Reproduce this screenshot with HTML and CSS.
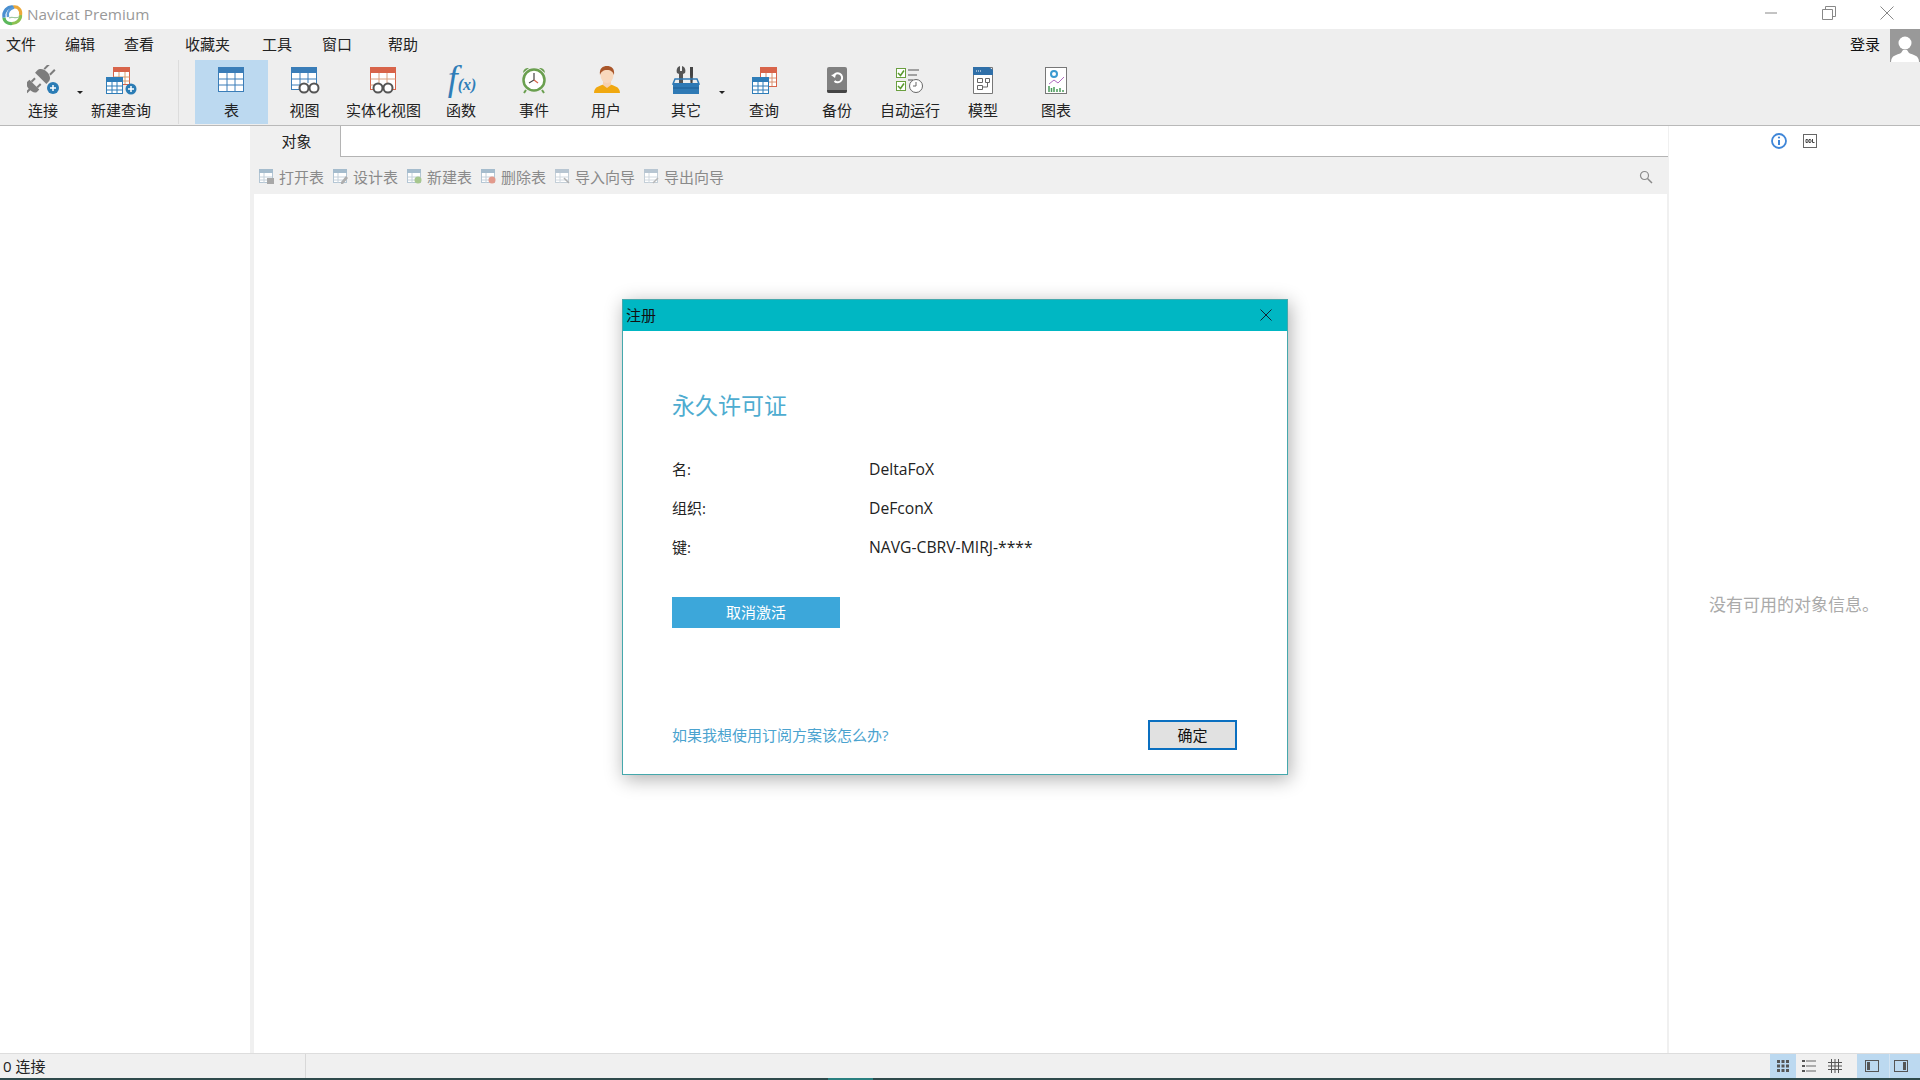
FILE: index.html
```html
<!DOCTYPE html>
<html lang="zh-CN">
<head>
<meta charset="utf-8">
<title>Navicat Premium</title>
<link rel="stylesheet" href="styles.css">
</head>
<body>
<div class="app">
  <header class="titlebar">
    <svg class="logo" width="22" height="22" viewBox="0 0 22 22"><path d="M11 19.500c-4 .5-8-2-8-6" fill="none" stroke="#5cb85c" stroke-width="3.200"/><path d="M19.500 11c.5 5-4 8.500-8.500 8.500" fill="none" stroke="#8cc152" stroke-width="3.200"/><path d="M12 3c5-1 8.500 3 7.500 8" fill="none" stroke="#eba83a" stroke-width="3.200"/><path d="M3 13.500C2 7 7 2 12 3" fill="none" stroke="#4a8fd0" stroke-width="3.200"/><path d="M13 3.500C8 5 6 9 7 13" fill="none" stroke="#5a9ad8" stroke-width="2.500"/><path d="M8 14c3-2 6 1 10-1" fill="none" stroke="#9fc8a0" stroke-width="1.200"/></svg>
    <span class="app-name">Navicat Premium</span>
    <div class="winctl">
      <svg width="14" height="14" viewBox="0 0 14 14"><path d="M1 7h12" stroke="#888" fill="none"/></svg>
      <svg width="14" height="14" viewBox="0 0 14 14"><path d="M.5 3.500h10v10H.5zM3.500 3.500v-3h10v10h-3" stroke="#888" fill="none"/></svg>
      <svg width="14" height="14" viewBox="0 0 14 14"><path d="M.5.500l13 13M13.500.500l-13 13" stroke="#888" fill="none"/></svg>
    </div>
  </header>

  <div class="chrome">
    <nav class="menubar">
      <span class="menu">文件</span>
      <span class="menu">编辑</span>
      <span class="menu">查看</span>
      <span class="menu m-fav">收藏夹</span>
      <span class="menu m-tool">工具</span>
      <span class="menu m-win">窗口</span>
      <span class="menu m-help">帮助</span>
      <span class="login">登录</span>
      <span class="avatar"><svg width="30" height="33" viewBox="0 0 30 33"><circle cx="15" cy="14" r="6.500" fill="#fff"/><path d="M1 33c0-7 6-7 10-9l2-3h4l2 3c4 2 10 2 10 9z" fill="#fff"/></svg></span>
    </nav>

    <div class="toolbar">
      <div class="tool w74">
        <svg width="32" height="30" viewBox="0 0 32 30"><g fill="#7d7d7d" transform="rotate(-45 13 14)"><path d="M-6 13h8v2h-8z"/><path d="M2 7h3v14H2c-3 0-4-4-4-7s1-7 4-7z"/><path d="M5 9h5v2H5zM5 17h5v2H5z"/><path d="M14 6h3c4 0 6 4 6 8s-2 8-6 8h-3z"/><path d="M23 9h7v2h-7zM23 17h7v2h-7z"/></g><circle cx="26" cy="23" r="6" fill="#2b7cb5"/><path d="M26 20v6M23 23h6" stroke="#fff" stroke-width="1.500"/></svg>
        <span class="tool-label">连接</span><span class="caret"></span>
      </div>
      <div class="tool w82">
        <svg width="32" height="30" viewBox="0 0 32 30"><rect x="8.500" y="2.500" width="16" height="17" fill="#fff" stroke="#d8644a"/><rect x="8" y="2" width="17" height="5" fill="#d8644a"/><path d="M8.500 12h16M8.500 16h16M14 7v12M20 7v12" stroke="#d8a070" fill="none"/><rect x="1.500" y="12.500" width="16" height="16" fill="#fff" stroke="#2f7db8"/><rect x="1" y="12" width="17" height="5" fill="#2f7db8"/><path d="M1.500 21h16M1.500 25h16M7 17v11M12 17v11" stroke="#2f7db8" fill="none"/><circle cx="26" cy="24" r="5.500" fill="#2b7cb5"/><path d="M26 21v6M23 24h6" stroke="#fff" stroke-width="1.500"/></svg>
        <span class="tool-label">新建查询</span>
      </div>
      <div class="tb-sep"></div>
      <div class="tool w73 active">
        <svg width="32" height="30" viewBox="0 0 32 30"><rect x="3.500" y="2.500" width="25" height="24" fill="#fff" stroke="#3a7db8"/><rect x="3" y="2" width="26" height="6" fill="#3a7db8"/><path d="M3.500 14h25M3.500 20h25M12 8v18M20 8v18" stroke="#3a7db8" fill="none"/></svg>
        <span class="tool-label">表</span>
      </div>
      <div class="tool w73">
        <svg width="32" height="30" viewBox="0 0 32 30"><rect x="3.500" y="2.500" width="25" height="22" fill="#fff" stroke="#3a7db8"/><rect x="3" y="2" width="26" height="6" fill="#3a7db8"/><path d="M3.500 14h25M3.500 20h12M12 8v14M20 8v10" stroke="#3a7db8" fill="none"/><circle cx="16" cy="23" r="4.500" fill="#fff" stroke="#555" stroke-width="2"/><circle cx="26" cy="23" r="4.500" fill="#fff" stroke="#555" stroke-width="2"/></svg>
        <span class="tool-label">视图</span>
      </div>
      <div class="tool w85">
        <svg width="32" height="30" viewBox="0 0 32 30"><rect x="3.500" y="2.500" width="25" height="22" fill="#fff" stroke="#d8644a"/><rect x="3" y="2" width="26" height="6" fill="#d8644a"/><path d="M3.500 14h25M3.500 20h10M12 8v14M20 8v10" stroke="#d8a080" fill="none"/><circle cx="11" cy="23" r="4.500" fill="#fff" stroke="#555" stroke-width="2"/><circle cx="21" cy="23" r="4.500" fill="#fff" stroke="#555" stroke-width="2"/></svg>
        <span class="tool-label">实体化视图</span>
      </div>
      <div class="tool w70">
        <span class="fx"><i class="fx-f">f</i><i class="fx-x">(x)</i></span>
        <span class="tool-label">函数</span>
      </div>
      <div class="tool w76">
        <svg width="32" height="30" viewBox="0 0 32 30"><path d="M5 8a5 5 0 0 1 6-5zM27 8a5 5 0 0 0-6-5z" fill="#6a9f4f"/><path d="M8 25l-2 3M24 25l2 3" stroke="#6a9f4f" stroke-width="2"/><circle cx="16" cy="15" r="10.500" fill="#fff" stroke="#6a9f4f" stroke-width="2.500"/><path d="M16 8v7l-5 3" stroke="#444" stroke-width="1.200" fill="none"/><path d="M16 15l4 3" stroke="#d8644a" stroke-width="1.200"/></svg>
        <span class="tool-label">事件</span>
      </div>
      <div class="tool w68">
        <svg width="32" height="30" viewBox="0 0 32 30"><path d="M4 28c0-7 7-7 10-9h6c3 2 10 2 10 9z" fill="#f0a810"/><path d="M13 16h8v4l-4 3-4-3z" fill="#f6d0b0"/><ellipse cx="17" cy="10" rx="6.500" ry="8" fill="#f8d8bc"/><path d="M10 10C9 3 13 1 17 1s8 2 7 9c-1-3-3-5-7-5s-6 2-7 5z" fill="#a9562a"/></svg>
        <span class="tool-label">用户</span>
      </div>
      <div class="tool w92">
        <svg width="32" height="30" viewBox="0 0 32 30"><path d="M10 1v5h2V1c3 1 4 4 3 7l-2 1v9H9V9L7 8C6 5 7 2 10 1z" fill="#555"/><path d="M20 2h3v8l-.5 8h-2L20 10z" fill="#444"/><path d="M3 18h26v11H3z" fill="#2f7ab5"/><path d="M5 14h22l2 5H3z" fill="none" stroke="#2f7ab5" stroke-width="1.500"/><path d="M3 23h26" stroke="#1f5f95"/></svg>
        <span class="tool-label">其它</span><span class="caret caret-other"></span>
      </div>
      <div class="tool w64">
        <svg width="32" height="30" viewBox="0 0 32 30"><rect x="12.500" y="2.500" width="16" height="19" fill="#fff" stroke="#d8644a"/><rect x="12" y="2" width="17" height="6" fill="#d8644a"/><path d="M18 8v13M24 8v13M18 13h10M18 17h10" stroke="#d89070" fill="none"/><rect x="4.500" y="12.500" width="16" height="16" fill="#fff" stroke="#2f7db8"/><rect x="4" y="12" width="17" height="5" fill="#2f7db8"/><path d="M4.500 21h16M4.500 25h16M10 17v11M15 17v11" stroke="#2f7db8" fill="none"/></svg>
        <span class="tool-label">查询</span>
      </div>
      <div class="tool w82">
        <svg width="32" height="30" viewBox="0 0 32 30"><rect x="6" y="2" width="20" height="26" rx="2" fill="#808080"/><path d="M6 25h20v1a2 2 0 0 1-2 2H8a2 2 0 0 1-2-2z" fill="#444"/><path d="M12.500 11a4.500 4.500 0 1 1 1 5" fill="none" stroke="#fff" stroke-width="2"/><path d="M10 10l5-1-1 4z" fill="#fff"/></svg>
        <span class="tool-label">备份</span>
      </div>
      <div class="tool w64">
        <svg width="32" height="30" viewBox="0 0 32 30"><rect x="2.500" y="3.500" width="9" height="9" fill="#fff" stroke="#6a9f3f"/><rect x="2.500" y="16.500" width="9" height="9" fill="#fff" stroke="#6a9f3f"/><path d="M4 8l2.500 2.500L10 5.500M4 21l2.500 2.500L10 18.500" stroke="#5a9a2f" stroke-width="1.500" fill="none"/><path d="M14 5h11M14 10h9M14 15h5" stroke="#888" stroke-width="1.500"/><circle cx="22" cy="21" r="6.500" fill="#fff" stroke="#666"/><path d="M22 17v4h-3" stroke="#666" fill="none"/></svg>
        <span class="tool-label">自动运行</span>
      </div>
      <div class="tool w82">
        <svg width="32" height="30" viewBox="0 0 32 30"><path d="M6.500 2.500h19v26h-19z" fill="#fff" stroke="#777"/><path d="M6 2h16l4 3v5H6z" fill="#2f6fa8"/><path d="M9 6h1M11 6h1M13 6h1" stroke="#fff"/><path d="M10.500 13.500h5v4h-5zM18.500 13.500h4v4h-4zM10.500 20.500h5v4h-5zM15.500 22h5v-4.500" stroke="#666" fill="none"/></svg>
        <span class="tool-label">模型</span>
      </div>
      <div class="tool w64">
        <svg width="32" height="30" viewBox="0 0 32 30"><rect x="5.500" y="2.500" width="21" height="26" fill="#fff" stroke="#777"/><circle cx="14" cy="9" r="3" fill="none" stroke="#3a9ad0" stroke-width="2"/><path d="M9 19l5-4 4 3 6-6" stroke="#b06ac0" fill="none"/><path d="M9 27v-6M11.500 27v-4M14 27v-5M17 27v-3M20 27v-4M23 27v-2" stroke="#4a9a5a" stroke-width="1.500"/></svg>
        <span class="tool-label">图表</span>
      </div>
    </div>
  </div>

  <main class="workspace">
    <aside class="nav-pane"></aside>
    <section class="center-pane">
      <div class="tabrow">
        <span class="tab">对象</span>
        <span class="tab-fill"></span>
      </div>
      <div class="actions">
        <span class="action"><svg class="act-ico" width="15" height="15" viewBox="0 0 15 15"><rect x=".5" y=".5" width="13" height="13" fill="#fff" stroke="#b4c6d4"/><rect y="0" width="14" height="4" fill="#a5bccd"/><path d="M5 4v10M1 8h12M1 11h12" stroke="#c4d0da"/><rect x="8" y="9" width="7" height="6" fill="#a8a8a8"/></svg>打开表</span>
        <span class="action"><svg class="act-ico" width="15" height="15" viewBox="0 0 15 15"><rect x=".5" y=".5" width="13" height="13" fill="#fff" stroke="#b4c6d4"/><rect y="0" width="14" height="4" fill="#a5bccd"/><path d="M5 4v10M1 8h12M1 11h12" stroke="#c4d0da"/><path d="M8 13l5-6 2 2-5 6H8z" fill="#aeaeae"/></svg>设计表</span>
        <span class="action"><svg class="act-ico" width="15" height="15" viewBox="0 0 15 15"><rect x=".5" y=".5" width="13" height="13" fill="#fff" stroke="#b4c6d4"/><rect y="0" width="14" height="4" fill="#a5bccd"/><path d="M5 4v10M1 8h12M1 11h12" stroke="#c4d0da"/><circle cx="11" cy="11" r="3.500" fill="#a7c78f"/></svg>新建表</span>
        <span class="action"><svg class="act-ico" width="15" height="15" viewBox="0 0 15 15"><rect x=".5" y=".5" width="13" height="13" fill="#fff" stroke="#b4c6d4"/><rect y="0" width="14" height="4" fill="#a5bccd"/><path d="M5 4v10M1 8h12M1 11h12" stroke="#c4d0da"/><circle cx="11" cy="11" r="3.500" fill="#e29a8c"/></svg>删除表</span>
        <span class="action"><svg class="act-ico" width="15" height="15" viewBox="0 0 15 15"><rect x=".5" y=".5" width="13" height="13" fill="#fff" stroke="#c4cfd8"/><rect y="0" width="14" height="4" fill="#b8c6d2"/><path d="M5 4v10M1 8h12M1 11h12" stroke="#d0d8df"/><path d="M9 9l5 5" stroke="#b0b0b0" stroke-width="1.500"/></svg>导入向导</span>
        <span class="action"><svg class="act-ico" width="15" height="15" viewBox="0 0 15 15"><rect x=".5" y=".5" width="13" height="13" fill="#fff" stroke="#c4cfd8"/><rect y="0" width="14" height="4" fill="#b8c6d2"/><path d="M5 4v10M1 8h12M1 11h12" stroke="#d0d8df"/><path d="M14 9l-5 5" stroke="#b8b8b8" stroke-width="1.500"/></svg>导出向导</span>
        <svg class="search" width="14" height="14" viewBox="0 0 14 14"><circle cx="5.500" cy="5.500" r="4" fill="none" stroke="#8a8a8a" stroke-width="1.200"/><path d="M8.500 8.500l4.500 4.500" stroke="#8a8a8a" stroke-width="1.500"/></svg>
      </div>
      <div class="objects"></div>
    </section>
    <aside class="info-pane">
      <div class="info-tabs">
        <svg width="18" height="18" viewBox="0 0 18 18"><circle cx="9" cy="9" r="7" fill="#fff" stroke="#3f86d8" stroke-width="1.800"/><path d="M9 8v5" stroke="#3f86d8" stroke-width="2"/><circle cx="9" cy="5.500" r="1.100" fill="#3f86d8"/></svg>
        <svg width="14" height="14" viewBox="0 0 14 14"><rect x=".5" y=".5" width="13" height="13" fill="#fff" stroke="#666"/><path d="M3 5.500h1.500l.5.500v2l-.5.500H3zM6 5.500h1.500l.5.500v2l-.5.500H6zM9.500 5v3.500H11.500" fill="none" stroke="#444"/></svg>
      </div>
      <p class="no-info">没有可用的对象信息。</p>
    </aside>
  </main>

  <footer class="statusbar">
    <span class="status-count">0 连接</span>
    <span class="status-fill"></span>
    <span class="sb-btn on"><svg width="14" height="14" viewBox="0 0 14 14"><path d="M1 1h3v3H1zM5.500 1h3v3h-3zM10 1h3v3h-3zM1 5.500h3v3H1zM5.500 5.500h3v3h-3zM10 5.500h3v3h-3zM1 10h3v3H1zM5.500 10h3v3h-3zM10 10h3v3h-3z" fill="#555"/></svg></span>
    <span class="sb-btn"><svg width="16" height="14" viewBox="0 0 16 14"><path d="M1 1h3v2H1zM1 6h3v2H1zM1 11h3v2H1z" fill="#555"/><path d="M5 2h10M5 7h10M5 12h10" stroke="#666"/></svg></span>
    <span class="sb-btn"><svg width="14" height="14" viewBox="0 0 14 14"><path d="M3.500 0v14M7 0v14M10.500 0v14M0 3.500h14M0 7h14M0 10.500h14" stroke="#555" fill="none"/></svg></span>
    <span class="sb-gap"></span>
    <span class="sb-btn wide on"><svg width="14" height="14" viewBox="0 0 14 14"><rect x=".5" y="1.500" width="13" height="11" fill="none" stroke="#555"/><rect x="2" y="3" width="3" height="8" fill="#555"/></svg></span>
    <span class="sb-btn wide on last"><svg width="14" height="14" viewBox="0 0 14 14"><rect x=".5" y="1.500" width="13" height="11" fill="none" stroke="#555"/><rect x="9" y="3" width="3" height="8" fill="#555"/></svg></span>
  </footer>
  <div class="taskstrip"><span class="taskstrip-tab"></span></div>

  <div class="dialog">
    <div class="dialog-title">
      <span>注册</span>
      <svg width="12" height="12" viewBox="0 0 12 12"><path d="M.5.500l11 11M11.500.500l-11 11" stroke="#123" fill="none"/></svg>
    </div>
    <div class="dialog-body">
      <h1 class="lic-title">永久许可证</h1>
      <dl class="lic-grid">
        <dt>名:</dt><dd>DeltaFoX</dd>
        <dt>组织:</dt><dd>DeFconX</dd>
        <dt>键:</dt><dd>NAVG-CBRV-MIRJ-****</dd>
      </dl>
      <button class="deactivate" type="button">取消激活</button>
      <div class="dialog-foot">
        <a class="sub-link">如果我想使用订阅方案该怎么办?</a>
        <button class="ok" type="button">确定</button>
      </div>
    </div>
  </div>
</div>
</body>
</html>
```
FILE: styles.css
```css
* { box-sizing: border-box; }
html, body { margin: 0; height: 100%; overflow: hidden; }
body {
  font-family: "Open Sans", "Noto Sans CJK SC", sans-serif;
  font-size: 15px;
  color: #222;
  background: #fff;
}
.app { position: relative; display: flex; flex-direction: column; height: 1080px; }

.titlebar { display: flex; align-items: center; height: 29px; padding-left: 1px; background: #fff; flex: none; }
.logo { flex: none; }
.app-name { margin-left: 4px; margin-bottom: 2px; color: #999; font-size: 15.3px; }
.winctl { margin-left: auto; display: flex; gap: 44px; padding: 0 26px 3px 0; }

.chrome { background: #eee; border-bottom: 1px solid #b9b9b9; flex: none; height: 97px; }
.menubar { display: flex; align-items: flex-start; height: 31px; padding-left: 6px; gap: 29px; }
.menu { font-size: 15px; line-height: 30px; color: #222; }
.m-fav { margin-left: 2px; }
.m-tool { margin-left: 3px; }
.m-win { margin-left: 1px; }
.m-help { margin-left: 7px; }
.login { margin-left: auto; line-height: 30px; color: #111; }
.avatar { width: 30px; height: 33px; margin-left: -19px; background: #999; overflow: hidden; }

.toolbar { display: flex; height: 65px; padding-left: 6px; }
.tool { position: relative; display: flex; flex-direction: column; align-items: center; height: 64px; padding-top: 5px; flex: none; }
.tool svg { display: block; flex: none; }
.tool-label { margin-top: 5px; font-size: 15px; line-height: 20px; color: #222; white-space: nowrap; }
.w64 { width: 64px; } .w68 { width: 68px; } .w70 { width: 70px; } .w73 { width: 73px; }
.w74 { width: 74px; } .w76 { width: 76px; } .w82 { width: 82px; }
.w85 { width: 85px; } .w92 { width: 92px; }
.w73 svg, .w85 svg { margin-right: 1px; }
.active { background: #bcd9f0; }
.tb-sep { width: 1px; height: 64px; margin: 0 16px; background: #dcdcdc; flex: none; }
.caret { position: absolute; right: -3px; top: 31px; border: 3px solid transparent; border-top: 3px solid #222; }
.caret-other { right: 7px; }
.fx { display: flex; align-items: baseline; height: 30px; margin-left: 2px; font-family: "Liberation Serif", serif; color: #2f7db8; }
.fx-f { font-size: 36px; line-height: 27px; }
.fx-x { font-size: 16px; font-weight: bold; }

.workspace { display: flex; flex: 1; min-height: 0; }
.nav-pane { width: 250px; background: #fff; flex: none; }
.center-pane { width: 1419px; flex: none; display: flex; flex-direction: column; background: #f0f0f0; padding-right: 2px; }
.tabrow { display: flex; height: 31px; flex: none; margin-right: -1px; }
.tab { width: 90px; padding-left: 3px; text-align: center; line-height: 30px; color: #222; background: #f0f0f0; }
.tab-fill { flex: 1; background: #fff; border-left: 1px solid #b4b4b4; border-bottom: 1px solid #b4b4b4; }
.actions { display: flex; align-items: center; height: 37px; padding: 1px 0 0 9px; gap: 9px; flex: none; }
.action { display: flex; align-items: center; gap: 5px; color: #8a8a8a; font-size: 15px; white-space: nowrap; }
.act-ico { flex: none; }
.search { margin-left: auto; margin-right: 14px; margin-top: 2px; }
.objects { flex: 1; margin-left: 4px; background: #fff; }
.info-pane { flex: 1; display: flex; flex-direction: column; background: #fff; }
.info-tabs { display: flex; align-items: center; gap: 15px; height: 30px; padding-left: 101px; }
.no-info { margin: 437px 0 0; text-align: center; font-size: 17px; line-height: 24px; color: #aaa; padding-right: 1px; white-space: nowrap; }

.statusbar { display: flex; align-items: stretch; height: 25px; background: #f0f0f0; border-top: 1px solid #ddd; flex: none; }
.status-count { width: 306px; padding-left: 3px; line-height: 25px; color: #222; border-right: 1px solid #d8d8d8; }
.status-fill { flex: 1; }
.sb-btn { width: 26px; display: flex; align-items: center; justify-content: center; }
.sb-btn.on { background: #bcd9f0; }
.sb-gap { width: 9px; }
.sb-btn.wide { width: 32px; padding-right: 2px; }
.sb-btn.last { width: 31px; padding-right: 8px; border-left: 1px solid #d4e4f2; }
.taskstrip { position: relative; height: 2px; background: #2f4a4c; flex: none; }
.taskstrip-tab { position: absolute; left: 828px; top: 0; width: 45px; height: 2px; background: #2a8080; }

.dialog { position: absolute; left: 622px; top: 299px; width: 666px; height: 476px; display: flex; flex-direction: column; background: #fff; border: 1px solid #45a8ac; box-shadow: 2px 4px 18px rgba(0,0,0,.32); }
.dialog-title { display: flex; align-items: center; justify-content: space-between; height: 31px; padding: 0 15px 2px 3px; background: #00b7c3; color: #111; font-size: 15px; flex: none; }
.dialog-body { flex: 1; display: flex; flex-direction: column; padding: 0 50px 24px 49px; }
.lic-title { margin: 57px 0 0; font-size: 23px; line-height: 34px; font-weight: normal; color: #4eacd0; }
.lic-grid { display: grid; grid-template-columns: 197px 1fr; grid-auto-rows: 39px; margin: 27px 0 0; align-items: center; }
.lic-grid dt, .lic-grid dd { margin: 0; font-size: 15px; color: #222; }
.lic-grid dd { font-size: 15.7px; }
.deactivate { width: 168px; height: 31px; margin-top: 31px; border: 0; padding: 0 0 2px; background: #3ca7da; color: #fff; font: inherit; font-size: 15px; }
.dialog-foot { margin-top: auto; display: flex; align-items: center; justify-content: space-between; }
.sub-link { margin-bottom: 2px; color: #4ba3cf; font-size: 15px; }
.ok { width: 89px; height: 30px; padding: 0 0 1px; background: #e1e1e1; border: 2px solid #0a6fc0; color: #111; font: inherit; font-size: 15px; }
```
